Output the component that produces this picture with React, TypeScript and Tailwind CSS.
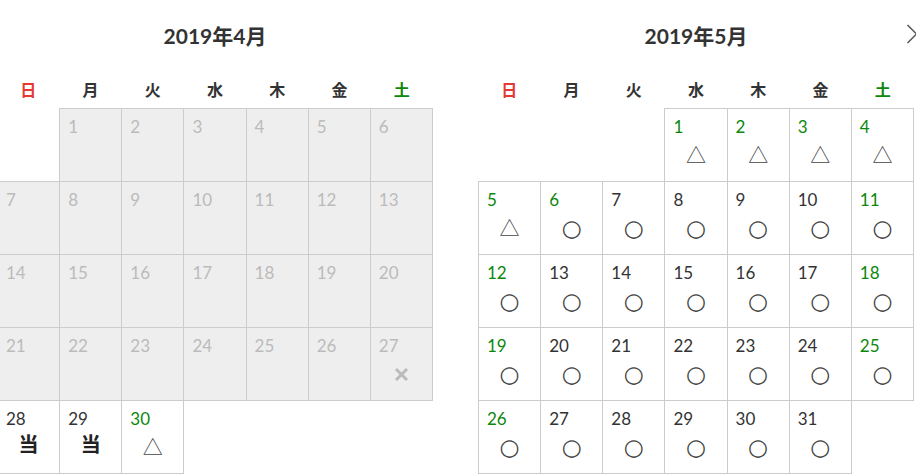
import React from 'react';

type Cell = {
    day: number;
    past?: boolean;
    green?: boolean;
    mark?: string;
};

const WEEK = ['日', '月', '火', '水', '木', '金', '土'];

// 4月: 1〜27日は受付終了
const april: Cell[] = Array.from({ length: 30 }, (_, i) => {
    const day = i + 1;
    if (day <= 27) return { day, past: true, mark: day === 27 ? '×' : undefined };
    if (day === 30) return { day, green: true, mark: '△' };
    return { day, mark: '当' };
});

const greenMay = [1, 2, 3, 4, 5, 6, 11, 12, 18, 19, 25, 26];
const may: Cell[] = Array.from({ length: 31 }, (_, i) => {
    const day = i + 1;
    return { day, green: greenMay.includes(day), mark: day <= 5 ? '△' : '○' };
});

function toWeeks(startDow: number, cells: Cell[]) {
    const flat: (Cell | null)[] = [...Array(startDow).fill(null), ...cells];
    while (flat.length % 7 !== 0) flat.push(null);
    const weeks: (Cell | null)[][] = [];
    for (let i = 0; i < flat.length; i += 7) weeks.push(flat.slice(i, i + 7));
    return weeks;
}

const DayCell: React.FC<{ cell: Cell | null }> = ({ cell }) => {
    if (!cell) return <td className="h-[73px] p-0" />;

    const numColor = cell.past ? 'text-[#bbbbbb]' : cell.green ? 'text-[#0c870c]' : 'text-[#333333]';

    return (
        <td className={`h-[73px] p-0 align-top border border-[#cccccc] ${cell.past ? 'bg-[#eeeeee]' : 'bg-white'}`}>
            <div className={`pl-[8px] pt-[8px] text-[17px] leading-[20px] ${numColor}`}>{cell.day}</div>
            {cell.mark === '×' && (
                <div className="flex justify-center mt-[11px]">
                    <svg width="15" height="15" viewBox="0 0 15 15">
                        <path d="M2 2 L13 13 M13 2 L2 13" stroke="#bbbbbb" strokeWidth="3" />
                    </svg>
                </div>
            )}
            {cell.mark === '当' && (
                <div className="text-center text-[20px] leading-[24px] font-bold text-[#222222] mt-[3px] font-['Noto_Sans_CJK_JP',sans-serif]">当</div>
            )}
            {cell.mark === '△' && (
                <div className="text-center text-[20px] leading-[24px] text-[#444444] mt-[6px] font-['Noto_Sans_CJK_JP',sans-serif]">△</div>
            )}
            {cell.mark === '○' && (
                <div className="text-center text-[23px] leading-[24px] text-[#444444] mt-[6px] font-['DejaVu_Sans',sans-serif]">○</div>
            )}
        </td>
    );
};

const Calendar: React.FC<{ title: string; startDow: number; cells: Cell[] }> = ({ title, startDow, cells }) => {
    const weeks = toWeeks(startDow, cells);
    return (
        <div className="w-[436px] shrink-0">
            <div className="h-[72px] flex items-center justify-center text-[21px] font-bold text-[#333333]">{title}</div>
            <div className="grid grid-cols-7 h-[36px] items-center">
                {WEEK.map((w, i) => (
                    <div
                        key={w}
                        className={`text-center text-[16px] font-bold ${i === 0 ? 'text-[#e53935]' : i === 6 ? 'text-[#0c870c]' : 'text-[#333333]'}`}
                    >
                        {w}
                    </div>
                ))}
            </div>
            <table className="w-[436px] table-fixed border-collapse">
                <tbody>
                    {weeks.map((week, wi) => (
                        <tr key={wi}>
                            {week.map((cell, ci) => (
                                <DayCell key={ci} cell={cell} />
                            ))}
                        </tr>
                    ))}
                </tbody>
            </table>
        </div>
    );
};

export default function App() {
    return (
        <div className="relative w-[916px] h-[476px] overflow-hidden bg-white font-['Lato','Noto_Sans_CJK_JP',sans-serif]">
            <div className="flex gap-[45px] -ml-[3px]">
                <Calendar title="2019年4月" startDow={1} cells={april} />
                <Calendar title="2019年5月" startDow={3} cells={may} />
            </div>
            {/* 次月ボタン */}
            <svg className="absolute left-[906px] top-[24px]" width="12" height="20" viewBox="0 0 12 20">
                <path d="M1.5 1 L10.5 10 L1.5 19" fill="none" stroke="#555555" strokeWidth="1.5" />
            </svg>
        </div>
    );
}
